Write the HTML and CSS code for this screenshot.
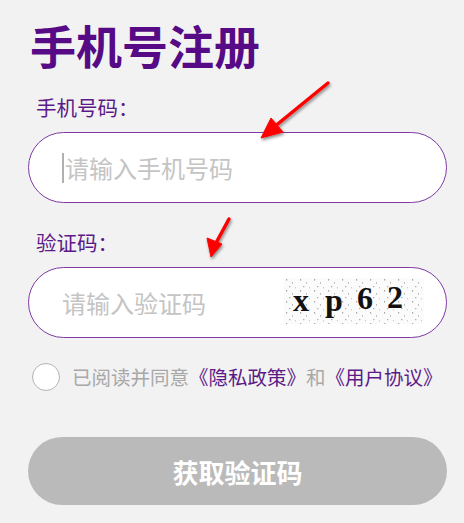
FILE: index.html
```html
<!DOCTYPE html>
<html lang="zh-CN">

<head>
    <meta charset="UTF-8">
    <meta name="viewport" content="width=device-width, initial-scale=1.0">
    <title>手机号注册</title>
    <link rel="stylesheet" href="styles.css">
</head>

<body>
    <div class="page">
        <h1 class="title">手机号注册</h1>

        <!-- 手机号 -->
        <label class="label">手机号码：</label>
        <div class="field">
            <span class="caret"></span>
            <input class="field-input" type="text" placeholder="请输入手机号码">
        </div>

        <!-- 验证码 -->
        <label class="label">验证码：</label>
        <div class="field">
            <input class="field-input" type="text" placeholder="请输入验证码">
            <svg class="captcha" width="140" height="46" viewBox="0 0 140 46">
                <defs>
                    <pattern id="noise" width="14" height="11" patternUnits="userSpaceOnUse">
                        <rect x="2" y="1" width="1.2" height="1.6" fill="#aaa"/>
                        <rect x="8" y="4" width="1" height="1.8" fill="#bbb"/>
                        <rect x="5" y="8" width="1.4" height="1.2" fill="#b0b0b0"/>
                        <rect x="11" y="9" width="1" height="1.4" fill="#ccc"/>
                    </pattern>
                </defs>
                <rect width="140" height="46" fill="#fbfbfb"/>
                <rect width="140" height="46" fill="url(#noise)"/>
                <text x="9" y="33" class="captcha-text">x</text>
                <text x="41" y="33" class="captcha-text">p</text>
                <text x="73" y="31" class="captcha-text">6</text>
                <text x="103" y="30" class="captcha-text">2</text>
            </svg>
        </div>

        <div class="agree">
            <span class="check"></span>
            <span class="agree-text">已阅读并同意<a class="link">《隐私政策》</a>和<a class="link">《用户协议》</a></span>
        </div>

        <button class="submit">获取验证码</button>
    </div>

    <!-- 标注箭头 -->
    <svg class="arrows" width="464" height="523" viewBox="0 0 464 523">
        <defs>
            <filter id="shadow" x="-20%" y="-20%" width="140%" height="140%">
                <feDropShadow dx="1" dy="2" stdDeviation="1.5" flood-color="#000" flood-opacity="0.45"/>
            </filter>
        </defs>
        <g fill="#ff0000" stroke="#ff0000" filter="url(#shadow)">
            <line x1="328" y1="83" x2="274" y2="127" stroke-width="3.5" stroke-linecap="round"/>
            <polygon points="261,138 271,118 283,132" stroke-width="1"/>
            <line x1="229" y1="219" x2="216" y2="243" stroke-width="3.5" stroke-linecap="round"/>
            <polygon points="211,257 207,238 222,244" stroke-width="1"/>
        </g>
    </svg>
</body>

</html>
```

FILE: styles.css
```css
body {
    margin: 0;
    background-color: #f2f2f2;
    font-family: "Noto Sans CJK SC", "Noto Sans", sans-serif;
}

.page {
    display: flex;
    flex-direction: column;
    padding: 0 17px 0 28px;
}

.title {
    margin: 13px 0 0 2px;
    font-size: 46px;
    line-height: 62px;
    font-weight: bold;
    color: #560a86;
}

.label {
    margin: 18px 0 0 8px;
    font-size: 20.5px;
    line-height: 28px;
    color: #5c1a88;
}

.field {
    display: flex;
    align-items: center;
    height: 69px;
    margin-top: 11px;
    padding: 0 22px 0 33px;
    background-color: #fff;
    border: 1.5px solid #7f3aa6;
    border-radius: 37px;
}

.caret {
    width: 2px;
    height: 30px;
    margin-right: 1px;
    background-color: #b0b0b0;
}

.field-input {
    flex: 1;
    min-width: 0;
    border: none;
    outline: none;
    padding: 0;
    background: transparent;
    font-family: inherit;
    font-size: 24px;
    color: #333;
}

.field-input::placeholder {
    color: #c4c4c4;
}

.field + .label {
    margin-top: 25px;
}

.captcha {
    flex: none;
    margin-top: -4px;
}

.captcha-text {
    font-family: "Liberation Serif", serif;
    font-weight: bold;
    font-size: 32px;
    fill: #111;
}

.agree {
    display: flex;
    align-items: center;
    margin-top: 24px;
    margin-left: 4px;
}

.check {
    flex: none;
    width: 26px;
    height: 26px;
    border: 1px solid #b4b4b4;
    border-radius: 50%;
    background-color: #fff;
}

.agree-text {
    margin-left: 12px;
    font-size: 19.5px;
    color: #a8a8a8;
    white-space: nowrap;
}

.link {
    color: #5c1a88;
}

.submit {
    height: 68px;
    margin-top: 46px;
    border: none;
    border-radius: 34px;
    background-color: #bababa;
    color: #fff;
    font-family: inherit;
    font-size: 26px;
    font-weight: bold;
}

.arrows {
    position: absolute;
    top: 0;
    left: 0;
    pointer-events: none;
}
```
